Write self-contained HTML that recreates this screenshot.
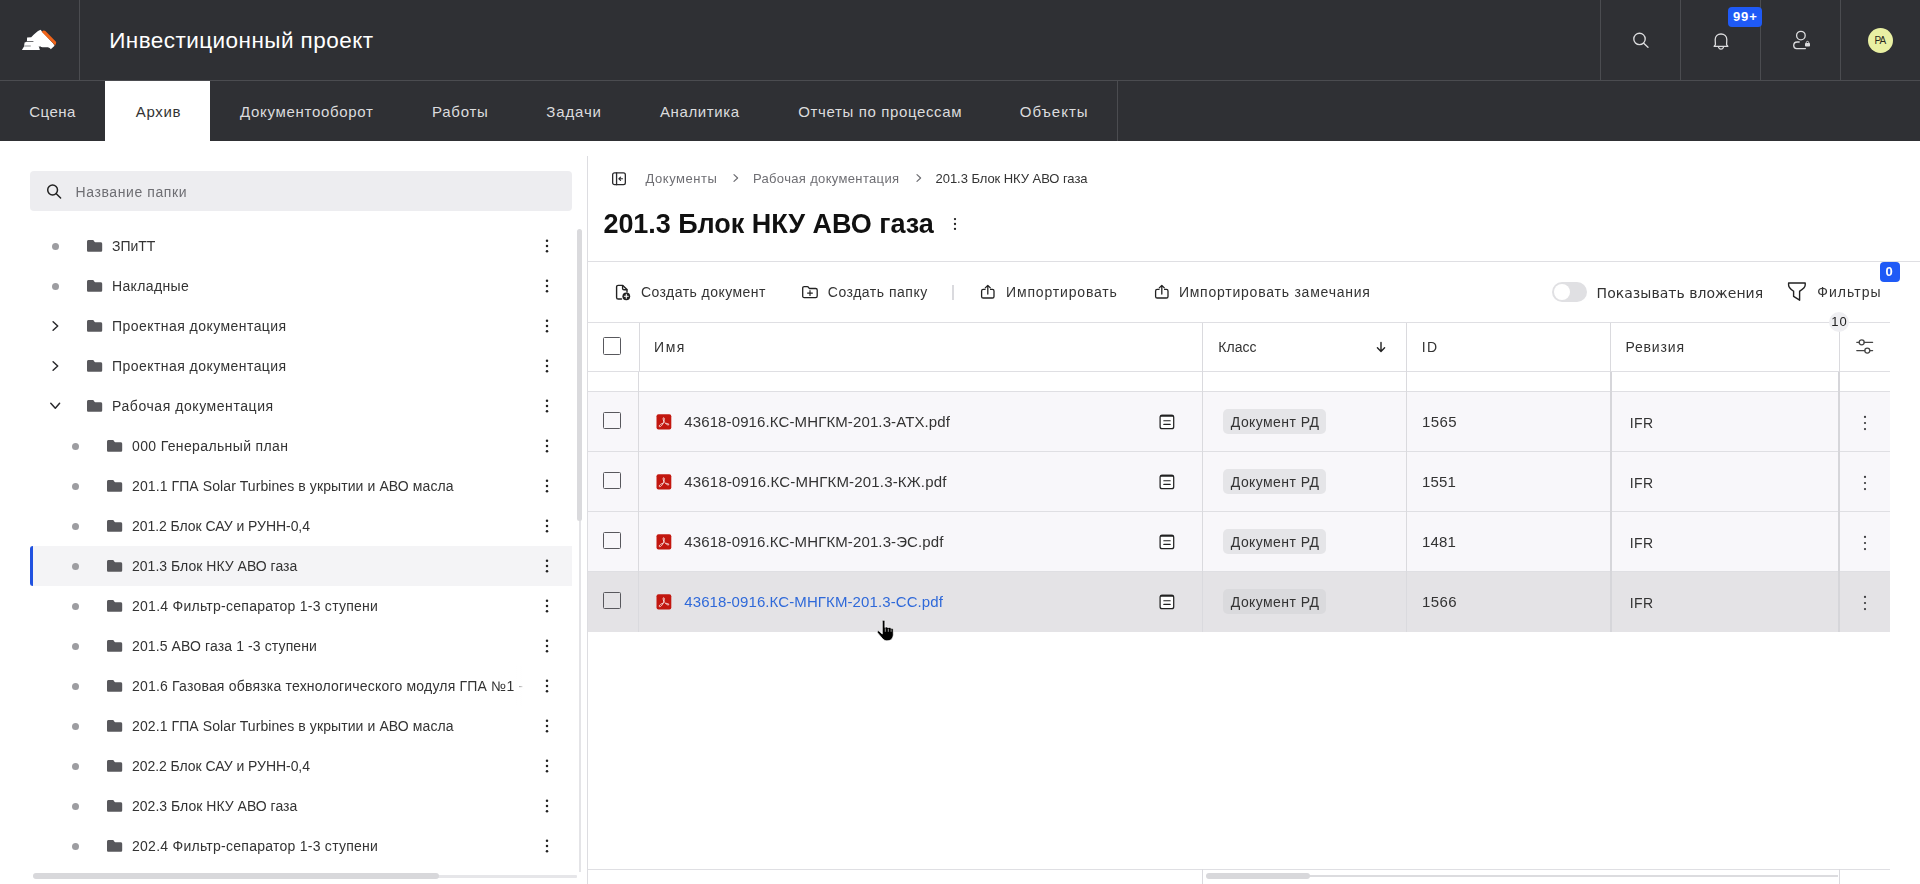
<!DOCTYPE html>
<html lang="ru">
<head>
<meta charset="utf-8">
<title>Инвестиционный проект</title>
<style>
*{box-sizing:border-box;margin:0;padding:0}
html,body{width:1920px;height:884px;overflow:hidden;background:#fff}
body{font-family:"Liberation Sans",sans-serif;font-size:14px;color:#333;position:relative}
div,span,svg{position:absolute}
svg{overflow:visible}
#hdr{left:0;top:0;width:1920px;height:141px;background:#2f3034}
.vl{top:0;width:1px;height:80px;background:#4b4c50}
.hl{left:0;top:80px;width:1920px;height:1px;background:#4b4c50}
#title{top:27px;font-size:22.5px;line-height:28px;color:#fff;white-space:nowrap}
.tab{top:82px;height:60px;line-height:60px;font-size:15px;color:#dcdcde;white-space:nowrap}
.tabbg{left:105px;top:81px;width:105px;height:60px;background:#fff}
.badge{background:#1f5af6;color:#fff;font-weight:bold;border-radius:4px;white-space:nowrap}
#vsep{left:587px;top:156px;width:1px;height:728px;background:#dddde1}
#search{left:30px;top:171px;width:542px;height:40px;background:#ededf0;border-radius:4px}
.ph{top:172px;line-height:40px;font-size:14px;color:#6e6e73;white-space:nowrap}
.sel{left:30px;width:542px;height:40px;background:#f4f4f6}
.selbar{left:30px;width:3px;height:40px;background:#2052e0;border-radius:3px 0 0 3px}
.dot{width:7px;height:7px;border-radius:50%;background:#9d9da1}
.lbl{line-height:40px;font-size:14px;color:#333;white-space:nowrap}
.crumb{top:170px;line-height:18px;font-size:13px;color:#6e6e73;white-space:nowrap}
#h1{top:206px;font-size:27px;line-height:36px;font-weight:bold;color:#111;white-space:nowrap}
.hline{height:1px;background:#dfdfe3}
.vline{width:1px;background:#dadade}
.tb{top:282px;line-height:20px;font-size:14px;color:#333;white-space:nowrap}
.th{top:337px;line-height:20px;font-size:14px;color:#333;white-space:nowrap}
.trow{left:588px;width:1302px;height:59px;background:#f8f7fa}
.cb{width:18px;height:18px;border:1.5px solid #58585d;border-radius:1.5px;background:#fff}
.fname{line-height:20px;font-size:15px;color:#333;white-space:nowrap}
.chip{left:1223px;width:103px;height:25px;background:#e5e5e8;border-radius:5px}
.chipt{line-height:20px;font-size:14px;color:#333;white-space:nowrap}
.cell{line-height:20px;font-size:15px;color:#333;white-space:nowrap}
.cell14{line-height:20px;font-size:14px;color:#333;white-space:nowrap}
</style>
</head>
<body>
<div id="hdr"></div>
<div class="vl" style="left:79px"></div>
<div class="vl" style="left:1600px"></div>
<div class="vl" style="left:1680px"></div>
<div class="vl" style="left:1760px"></div>
<div class="vl" style="left:1840px"></div>
<div class="hl"></div>
<div class="tabbg"></div>
<div class="vl" style="left:1117px;top:81px;height:60px"></div>
<div id="title" style="left:109.19px;letter-spacing:0.446px;">Инвестиционный проект</div>
<div class="tab" style="left:29.25px;letter-spacing:0.45px;">Сцена</div>
<div class="tab" style="left:135.7px;letter-spacing:0.716px;color:#333">Архив</div>
<div class="tab" style="left:239.94px;letter-spacing:0.697px;">Документооборот</div>
<div class="tab" style="left:432.11px;letter-spacing:0.705px;">Работы</div>
<div class="tab" style="left:546.26px;letter-spacing:0.872px;">Задачи</div>
<div class="tab" style="left:660.0px;letter-spacing:0.594px;">Аналитика</div>
<div class="tab" style="left:798.31px;letter-spacing:0.628px;">Отчеты по процессам</div>
<div class="tab" style="left:1019.81px;letter-spacing:0.979px;">Объекты</div>
<svg style="left:20px;top:28px" width="40" height="24" viewBox="20 28 40 24">
<path d="M21.9 49.9 L24 46.4 L24.6 42.4 L26.9 41.8 L27.1 37.6 L31.2 37.3 C34 34 37 31.2 40.6 29.7 L42 31.5 L53.2 43.6 L54.6 45.8 L50.8 49.2 C49.8 47.8 48.6 47.2 46.5 47.2 L42.5 47.2 C40.8 47.2 39.6 46.8 38.7 46 L39.9 49.9 Z" fill="#fff"/>
<path d="M41.5 31.7 L42.8 30.9 C43.8 30.2 44.6 30.3 45.4 31.1 L55.7 41.6 C56.3 42.2 56.3 43 55.9 43.8 L54.9 45.8 C54.7 44.8 54.2 44.2 53.4 43.4 L42.4 32.6 Z" fill="#f0641a"/>
<path d="M27 41 L33.4 41 L33.4 41.7 L27 41.7 Z" fill="#2f3034"/>
<path d="M24.2 45.6 L30.8 45.6 L30.8 46.5 L24 46.5 Z" fill="#8e8f92"/>
</svg>
<svg style="left:1630px;top:30px" width="20" height="20" viewBox="0 0 20 20" fill="none" stroke="#dcdcde" stroke-width="1.35" stroke-linecap="round"><circle cx="9.5" cy="8.9" r="5.7"/><path d="M13.7 13.2 L18 17.3"/></svg>
<svg style="left:1710px;top:30px" width="22" height="22" viewBox="1710 30 22 22" fill="none" stroke="#dcdcde" stroke-width="1.3" stroke-linecap="round" stroke-linejoin="round"><path d="M1715.4 44.4 C1715.4 42.6 1715.2 41 1715.2 39.6 C1715.2 36.2 1717.8 34 1721 34 C1724.2 34 1726.8 36.2 1726.8 39.6 C1726.8 41 1726.6 42.6 1726.6 44.4 C1726.6 45.2 1727.8 45.6 1727.8 46.4 L1714.2 46.4 C1714.2 45.6 1715.4 45.2 1715.4 44.4 Z"/><path d="M1718.6 47.4 C1719 48.6 1719.9 49.2 1721 49.2 C1722.1 49.2 1723 48.6 1723.4 47.4"/></svg>
<svg style="left:1790px;top:29px" width="22" height="22" viewBox="1790 29 22 22" fill="none" stroke="#dcdcde" stroke-width="1.3" stroke-linecap="round" stroke-linejoin="round"><circle cx="1800.9" cy="35.6" r="4.3"/><path d="M1799.2 42 L1797.2 42 C1794.8 42 1793.7 43.6 1793.7 45.6 C1793.7 47.6 1794.8 48.6 1796.6 48.6 L1805.4 48.6"/><rect x="1805" y="43" width="5" height="3.6" rx=".8" fill="#dcdcde" stroke="none"/><path d="M1806.3 43.2 L1806.3 42.4 C1806.3 41 1808.7 41 1808.7 42.4 L1808.7 43.2" stroke-width="1"/></svg>
<div style="left:1868px;top:28px;width:25px;height:25px;border-radius:50%;background:#e9f0a3"></div>
<div class="" style="left:1874.39px;letter-spacing:-0.812px;top:34px;line-height:14px;font-size:10px;color:#2a2a20;white-space:nowrap">PA</div>
<div class="badge" style="left:1728px;top:7px;width:34px;height:20px"></div>
<div class="badge" style="left:1733.06px;letter-spacing:0.837px;top:8px;line-height:18px;font-size:13px;background:none">99+</div>
<div id="content" style="left:0;top:0;width:1920px;height:884px;will-change:transform">
<div id="vsep"></div>
<div id="search"></div>
<svg style="left:46px;top:183px" width="17" height="17" viewBox="0 0 17 17" fill="none" stroke="#222" stroke-width="1.5" stroke-linecap="round"><circle cx="6.6" cy="7" r="4.9"/><path d="M10.3 10.8 L14.6 15"/></svg>
<div class="ph" style="left:75.58px;letter-spacing:0.581px;">Название папки</div>
<div class="dot" style="left:51.5px;top:242.5px"></div>
<svg style="left:86.7px;top:240px" width="15.2" height="11.9" viewBox="0 0 15.4 11.9"><path d="M1.6 0 L5.6 0 C6.4 0 6.7 .4 7.1 1 L7.6 1.7 C7.8 2 8 2.1 8.4 2.1 L13.8 2.1 C14.8 2.1 15.4 2.7 15.4 3.7 L15.4 10.3 C15.4 11.3 14.8 11.9 13.8 11.9 L1.6 11.9 C.6 11.9 0 11.3 0 10.3 L0 1.6 C0 .6 .6 0 1.6 0 Z" fill="#58585c"/></svg>
<div class="lbl" style="left:112px;letter-spacing:-0.056px;top:226px">ЗПиТТ</div>
<svg style="left:543.8px;top:236.8px" width="6" height="18" viewBox="-3 -9 6 18"><circle cx="0" cy="-5.2" r="1.25" fill="#222"/><circle cx="0" cy="0" r="1.25" fill="#222"/><circle cx="0" cy="5.2" r="1.25" fill="#222"/></svg>
<div class="dot" style="left:51.5px;top:282.5px"></div>
<svg style="left:86.7px;top:280px" width="15.2" height="11.9" viewBox="0 0 15.4 11.9"><path d="M1.6 0 L5.6 0 C6.4 0 6.7 .4 7.1 1 L7.6 1.7 C7.8 2 8 2.1 8.4 2.1 L13.8 2.1 C14.8 2.1 15.4 2.7 15.4 3.7 L15.4 10.3 C15.4 11.3 14.8 11.9 13.8 11.9 L1.6 11.9 C.6 11.9 0 11.3 0 10.3 L0 1.6 C0 .6 .6 0 1.6 0 Z" fill="#58585c"/></svg>
<div class="lbl" style="left:112px;letter-spacing:0.361px;top:266px">Накладные</div>
<svg style="left:543.8px;top:276.8px" width="6" height="18" viewBox="-3 -9 6 18"><circle cx="0" cy="-5.2" r="1.25" fill="#222"/><circle cx="0" cy="0" r="1.25" fill="#222"/><circle cx="0" cy="5.2" r="1.25" fill="#222"/></svg>
<svg style="left:50px;top:319px" width="12" height="14" viewBox="0 0 12 14" fill="none" stroke="#2a2a2d" stroke-width="1.5" stroke-linecap="round" stroke-linejoin="round"><path d="M3.1 2.7 L7.7 7 L3.1 11.3"/></svg>
<svg style="left:86.7px;top:320px" width="15.2" height="11.9" viewBox="0 0 15.4 11.9"><path d="M1.6 0 L5.6 0 C6.4 0 6.7 .4 7.1 1 L7.6 1.7 C7.8 2 8 2.1 8.4 2.1 L13.8 2.1 C14.8 2.1 15.4 2.7 15.4 3.7 L15.4 10.3 C15.4 11.3 14.8 11.9 13.8 11.9 L1.6 11.9 C.6 11.9 0 11.3 0 10.3 L0 1.6 C0 .6 .6 0 1.6 0 Z" fill="#58585c"/></svg>
<div class="lbl" style="left:112px;letter-spacing:0.447px;top:306px">Проектная документация</div>
<svg style="left:543.8px;top:316.8px" width="6" height="18" viewBox="-3 -9 6 18"><circle cx="0" cy="-5.2" r="1.25" fill="#222"/><circle cx="0" cy="0" r="1.25" fill="#222"/><circle cx="0" cy="5.2" r="1.25" fill="#222"/></svg>
<svg style="left:50px;top:359px" width="12" height="14" viewBox="0 0 12 14" fill="none" stroke="#2a2a2d" stroke-width="1.5" stroke-linecap="round" stroke-linejoin="round"><path d="M3.1 2.7 L7.7 7 L3.1 11.3"/></svg>
<svg style="left:86.7px;top:360px" width="15.2" height="11.9" viewBox="0 0 15.4 11.9"><path d="M1.6 0 L5.6 0 C6.4 0 6.7 .4 7.1 1 L7.6 1.7 C7.8 2 8 2.1 8.4 2.1 L13.8 2.1 C14.8 2.1 15.4 2.7 15.4 3.7 L15.4 10.3 C15.4 11.3 14.8 11.9 13.8 11.9 L1.6 11.9 C.6 11.9 0 11.3 0 10.3 L0 1.6 C0 .6 .6 0 1.6 0 Z" fill="#58585c"/></svg>
<div class="lbl" style="left:112px;letter-spacing:0.447px;top:346px">Проектная документация</div>
<svg style="left:543.8px;top:356.8px" width="6" height="18" viewBox="-3 -9 6 18"><circle cx="0" cy="-5.2" r="1.25" fill="#222"/><circle cx="0" cy="0" r="1.25" fill="#222"/><circle cx="0" cy="5.2" r="1.25" fill="#222"/></svg>
<svg style="left:49px;top:400px" width="14" height="12" viewBox="0 0 14 12" fill="none" stroke="#2a2a2d" stroke-width="1.5" stroke-linecap="round" stroke-linejoin="round"><path d="M1.8 3.3 L6.3 8.2 L10.6 3.3"/></svg>
<svg style="left:86.7px;top:400px" width="15.2" height="11.9" viewBox="0 0 15.4 11.9"><path d="M1.6 0 L5.6 0 C6.4 0 6.7 .4 7.1 1 L7.6 1.7 C7.8 2 8 2.1 8.4 2.1 L13.8 2.1 C14.8 2.1 15.4 2.7 15.4 3.7 L15.4 10.3 C15.4 11.3 14.8 11.9 13.8 11.9 L1.6 11.9 C.6 11.9 0 11.3 0 10.3 L0 1.6 C0 .6 .6 0 1.6 0 Z" fill="#58585c"/></svg>
<div class="lbl" style="left:112px;letter-spacing:0.566px;top:386px">Рабочая документация</div>
<svg style="left:543.8px;top:396.8px" width="6" height="18" viewBox="-3 -9 6 18"><circle cx="0" cy="-5.2" r="1.25" fill="#222"/><circle cx="0" cy="0" r="1.25" fill="#222"/><circle cx="0" cy="5.2" r="1.25" fill="#222"/></svg>
<div class="dot" style="left:71.5px;top:442.5px"></div>
<svg style="left:106.7px;top:440px" width="15.2" height="11.9" viewBox="0 0 15.4 11.9"><path d="M1.6 0 L5.6 0 C6.4 0 6.7 .4 7.1 1 L7.6 1.7 C7.8 2 8 2.1 8.4 2.1 L13.8 2.1 C14.8 2.1 15.4 2.7 15.4 3.7 L15.4 10.3 C15.4 11.3 14.8 11.9 13.8 11.9 L1.6 11.9 C.6 11.9 0 11.3 0 10.3 L0 1.6 C0 .6 .6 0 1.6 0 Z" fill="#58585c"/></svg>
<div class="lbl" style="left:132px;letter-spacing:0.365px;top:426px">000 Генеральный план</div>
<svg style="left:543.8px;top:436.8px" width="6" height="18" viewBox="-3 -9 6 18"><circle cx="0" cy="-5.2" r="1.25" fill="#222"/><circle cx="0" cy="0" r="1.25" fill="#222"/><circle cx="0" cy="5.2" r="1.25" fill="#222"/></svg>
<div class="dot" style="left:71.5px;top:482.5px"></div>
<svg style="left:106.7px;top:480px" width="15.2" height="11.9" viewBox="0 0 15.4 11.9"><path d="M1.6 0 L5.6 0 C6.4 0 6.7 .4 7.1 1 L7.6 1.7 C7.8 2 8 2.1 8.4 2.1 L13.8 2.1 C14.8 2.1 15.4 2.7 15.4 3.7 L15.4 10.3 C15.4 11.3 14.8 11.9 13.8 11.9 L1.6 11.9 C.6 11.9 0 11.3 0 10.3 L0 1.6 C0 .6 .6 0 1.6 0 Z" fill="#58585c"/></svg>
<div class="lbl" style="left:132px;letter-spacing:0.095px;top:466px">201.1 ГПА Solar Turbines в укрытии и АВО масла</div>
<svg style="left:543.8px;top:476.8px" width="6" height="18" viewBox="-3 -9 6 18"><circle cx="0" cy="-5.2" r="1.25" fill="#222"/><circle cx="0" cy="0" r="1.25" fill="#222"/><circle cx="0" cy="5.2" r="1.25" fill="#222"/></svg>
<div class="dot" style="left:71.5px;top:522.5px"></div>
<svg style="left:106.7px;top:520px" width="15.2" height="11.9" viewBox="0 0 15.4 11.9"><path d="M1.6 0 L5.6 0 C6.4 0 6.7 .4 7.1 1 L7.6 1.7 C7.8 2 8 2.1 8.4 2.1 L13.8 2.1 C14.8 2.1 15.4 2.7 15.4 3.7 L15.4 10.3 C15.4 11.3 14.8 11.9 13.8 11.9 L1.6 11.9 C.6 11.9 0 11.3 0 10.3 L0 1.6 C0 .6 .6 0 1.6 0 Z" fill="#58585c"/></svg>
<div class="lbl" style="left:132px;letter-spacing:-0.058px;top:506px">201.2 Блок САУ и РУНН-0,4</div>
<svg style="left:543.8px;top:516.8px" width="6" height="18" viewBox="-3 -9 6 18"><circle cx="0" cy="-5.2" r="1.25" fill="#222"/><circle cx="0" cy="0" r="1.25" fill="#222"/><circle cx="0" cy="5.2" r="1.25" fill="#222"/></svg>
<div class="sel" style="top:546px"></div><div class="selbar" style="top:546px"></div>
<div class="dot" style="left:71.5px;top:562.5px"></div>
<svg style="left:106.7px;top:560px" width="15.2" height="11.9" viewBox="0 0 15.4 11.9"><path d="M1.6 0 L5.6 0 C6.4 0 6.7 .4 7.1 1 L7.6 1.7 C7.8 2 8 2.1 8.4 2.1 L13.8 2.1 C14.8 2.1 15.4 2.7 15.4 3.7 L15.4 10.3 C15.4 11.3 14.8 11.9 13.8 11.9 L1.6 11.9 C.6 11.9 0 11.3 0 10.3 L0 1.6 C0 .6 .6 0 1.6 0 Z" fill="#58585c"/></svg>
<div class="lbl" style="left:132px;letter-spacing:0.016px;top:546px">201.3 Блок НКУ АВО газа</div>
<svg style="left:543.8px;top:556.8px" width="6" height="18" viewBox="-3 -9 6 18"><circle cx="0" cy="-5.2" r="1.25" fill="#222"/><circle cx="0" cy="0" r="1.25" fill="#222"/><circle cx="0" cy="5.2" r="1.25" fill="#222"/></svg>
<div class="dot" style="left:71.5px;top:602.5px"></div>
<svg style="left:106.7px;top:600px" width="15.2" height="11.9" viewBox="0 0 15.4 11.9"><path d="M1.6 0 L5.6 0 C6.4 0 6.7 .4 7.1 1 L7.6 1.7 C7.8 2 8 2.1 8.4 2.1 L13.8 2.1 C14.8 2.1 15.4 2.7 15.4 3.7 L15.4 10.3 C15.4 11.3 14.8 11.9 13.8 11.9 L1.6 11.9 C.6 11.9 0 11.3 0 10.3 L0 1.6 C0 .6 .6 0 1.6 0 Z" fill="#58585c"/></svg>
<div class="lbl" style="left:132px;letter-spacing:0.259px;top:586px">201.4 Фильтр-сепаратор 1-3 ступени</div>
<svg style="left:543.8px;top:596.8px" width="6" height="18" viewBox="-3 -9 6 18"><circle cx="0" cy="-5.2" r="1.25" fill="#222"/><circle cx="0" cy="0" r="1.25" fill="#222"/><circle cx="0" cy="5.2" r="1.25" fill="#222"/></svg>
<div class="dot" style="left:71.5px;top:642.5px"></div>
<svg style="left:106.7px;top:640px" width="15.2" height="11.9" viewBox="0 0 15.4 11.9"><path d="M1.6 0 L5.6 0 C6.4 0 6.7 .4 7.1 1 L7.6 1.7 C7.8 2 8 2.1 8.4 2.1 L13.8 2.1 C14.8 2.1 15.4 2.7 15.4 3.7 L15.4 10.3 C15.4 11.3 14.8 11.9 13.8 11.9 L1.6 11.9 C.6 11.9 0 11.3 0 10.3 L0 1.6 C0 .6 .6 0 1.6 0 Z" fill="#58585c"/></svg>
<div class="lbl" style="left:132px;letter-spacing:0.115px;top:626px">201.5 АВО газа 1 -3 ступени</div>
<svg style="left:543.8px;top:636.8px" width="6" height="18" viewBox="-3 -9 6 18"><circle cx="0" cy="-5.2" r="1.25" fill="#222"/><circle cx="0" cy="0" r="1.25" fill="#222"/><circle cx="0" cy="5.2" r="1.25" fill="#222"/></svg>
<div class="dot" style="left:71.5px;top:682.5px"></div>
<svg style="left:106.7px;top:680px" width="15.2" height="11.9" viewBox="0 0 15.4 11.9"><path d="M1.6 0 L5.6 0 C6.4 0 6.7 .4 7.1 1 L7.6 1.7 C7.8 2 8 2.1 8.4 2.1 L13.8 2.1 C14.8 2.1 15.4 2.7 15.4 3.7 L15.4 10.3 C15.4 11.3 14.8 11.9 13.8 11.9 L1.6 11.9 C.6 11.9 0 11.3 0 10.3 L0 1.6 C0 .6 .6 0 1.6 0 Z" fill="#58585c"/></svg>
<div class="lbl" style="left:132px;top:666px;letter-spacing:0.2px;width:395px;overflow:hidden">201.6 Газовая обвязка технологического модуля ГПА №1 -3<span style="right:0;top:0;width:14px;height:40px;background:linear-gradient(90deg,rgba(255,255,255,0),#fff 80%)"></span></div>
<svg style="left:543.8px;top:676.8px" width="6" height="18" viewBox="-3 -9 6 18"><circle cx="0" cy="-5.2" r="1.25" fill="#222"/><circle cx="0" cy="0" r="1.25" fill="#222"/><circle cx="0" cy="5.2" r="1.25" fill="#222"/></svg>
<div class="dot" style="left:71.5px;top:722.5px"></div>
<svg style="left:106.7px;top:720px" width="15.2" height="11.9" viewBox="0 0 15.4 11.9"><path d="M1.6 0 L5.6 0 C6.4 0 6.7 .4 7.1 1 L7.6 1.7 C7.8 2 8 2.1 8.4 2.1 L13.8 2.1 C14.8 2.1 15.4 2.7 15.4 3.7 L15.4 10.3 C15.4 11.3 14.8 11.9 13.8 11.9 L1.6 11.9 C.6 11.9 0 11.3 0 10.3 L0 1.6 C0 .6 .6 0 1.6 0 Z" fill="#58585c"/></svg>
<div class="lbl" style="left:132px;letter-spacing:0.095px;top:706px">202.1 ГПА Solar Turbines в укрытии и АВО масла</div>
<svg style="left:543.8px;top:716.8px" width="6" height="18" viewBox="-3 -9 6 18"><circle cx="0" cy="-5.2" r="1.25" fill="#222"/><circle cx="0" cy="0" r="1.25" fill="#222"/><circle cx="0" cy="5.2" r="1.25" fill="#222"/></svg>
<div class="dot" style="left:71.5px;top:762.5px"></div>
<svg style="left:106.7px;top:760px" width="15.2" height="11.9" viewBox="0 0 15.4 11.9"><path d="M1.6 0 L5.6 0 C6.4 0 6.7 .4 7.1 1 L7.6 1.7 C7.8 2 8 2.1 8.4 2.1 L13.8 2.1 C14.8 2.1 15.4 2.7 15.4 3.7 L15.4 10.3 C15.4 11.3 14.8 11.9 13.8 11.9 L1.6 11.9 C.6 11.9 0 11.3 0 10.3 L0 1.6 C0 .6 .6 0 1.6 0 Z" fill="#58585c"/></svg>
<div class="lbl" style="left:132px;letter-spacing:-0.058px;top:746px">202.2 Блок САУ и РУНН-0,4</div>
<svg style="left:543.8px;top:756.8px" width="6" height="18" viewBox="-3 -9 6 18"><circle cx="0" cy="-5.2" r="1.25" fill="#222"/><circle cx="0" cy="0" r="1.25" fill="#222"/><circle cx="0" cy="5.2" r="1.25" fill="#222"/></svg>
<div class="dot" style="left:71.5px;top:802.5px"></div>
<svg style="left:106.7px;top:800px" width="15.2" height="11.9" viewBox="0 0 15.4 11.9"><path d="M1.6 0 L5.6 0 C6.4 0 6.7 .4 7.1 1 L7.6 1.7 C7.8 2 8 2.1 8.4 2.1 L13.8 2.1 C14.8 2.1 15.4 2.7 15.4 3.7 L15.4 10.3 C15.4 11.3 14.8 11.9 13.8 11.9 L1.6 11.9 C.6 11.9 0 11.3 0 10.3 L0 1.6 C0 .6 .6 0 1.6 0 Z" fill="#58585c"/></svg>
<div class="lbl" style="left:132px;letter-spacing:0.016px;top:786px">202.3 Блок НКУ АВО газа</div>
<svg style="left:543.8px;top:796.8px" width="6" height="18" viewBox="-3 -9 6 18"><circle cx="0" cy="-5.2" r="1.25" fill="#222"/><circle cx="0" cy="0" r="1.25" fill="#222"/><circle cx="0" cy="5.2" r="1.25" fill="#222"/></svg>
<div class="dot" style="left:71.5px;top:842.5px"></div>
<svg style="left:106.7px;top:840px" width="15.2" height="11.9" viewBox="0 0 15.4 11.9"><path d="M1.6 0 L5.6 0 C6.4 0 6.7 .4 7.1 1 L7.6 1.7 C7.8 2 8 2.1 8.4 2.1 L13.8 2.1 C14.8 2.1 15.4 2.7 15.4 3.7 L15.4 10.3 C15.4 11.3 14.8 11.9 13.8 11.9 L1.6 11.9 C.6 11.9 0 11.3 0 10.3 L0 1.6 C0 .6 .6 0 1.6 0 Z" fill="#58585c"/></svg>
<div class="lbl" style="left:132px;letter-spacing:0.259px;top:826px">202.4 Фильтр-сепаратор 1-3 ступени</div>
<svg style="left:543.8px;top:836.8px" width="6" height="18" viewBox="-3 -9 6 18"><circle cx="0" cy="-5.2" r="1.25" fill="#222"/><circle cx="0" cy="0" r="1.25" fill="#222"/><circle cx="0" cy="5.2" r="1.25" fill="#222"/></svg>
<div style="left:579px;top:232px;width:1.5px;height:640px;background:#e4e4e7"></div>
<div style="left:577px;top:229px;width:5px;height:292px;border-radius:2.5px;background:#dadadd"></div>
<div style="left:36px;top:875px;width:541px;height:2.5px;background:#e6e6e9;border-radius:1px"></div>
<div style="left:33px;top:873px;width:406px;height:6px;border-radius:3px;background:#d8d8db"></div>
<svg style="left:612px;top:172px" width="14" height="13.5" viewBox="0 0 15 14" fill="none" stroke="#2a2a2d" stroke-width="1.4" stroke-linejoin="round" stroke-linecap="round"><rect x=".7" y=".7" width="13.6" height="12.6" rx="2"/><path d="M4.9 .7 L4.9 13.3"/><path d="M11.3 7 L7.6 7 M9.2 5.2 L7.4 7 L9.2 8.8" stroke-width="1.2"/></svg>
<div class="crumb" style="left:645.54px;letter-spacing:0.534px;">Документы</div>
<div class="crumb" style="left:752.94px;letter-spacing:0.339px;">Рабочая документация</div>
<div class="crumb" style="left:935.58px;letter-spacing:-0.053px;color:#333">201.3 Блок НКУ АВО газа</div>
<svg style="left:733.3px;top:173px" width="6" height="10" viewBox="0 0 6 10" fill="none" stroke="#6e6e73" stroke-width="1.2" stroke-linecap="round" stroke-linejoin="round"><path d="M1 1.6 L4.6 5 L1 8.4"/></svg>
<svg style="left:916.2px;top:173px" width="6" height="10" viewBox="0 0 6 10" fill="none" stroke="#6e6e73" stroke-width="1.2" stroke-linecap="round" stroke-linejoin="round"><path d="M1 1.6 L4.6 5 L1 8.4"/></svg>
<div id="h1" style="left:603.42px;letter-spacing:-0.039px;">201.3 Блок НКУ АВО газа</div>
<svg style="left:952px;top:215.2px" width="6" height="18" viewBox="-3 -9 6 18"><circle cx="0" cy="-4.9" r="1.15" fill="#222"/><circle cx="0" cy="0" r="1.15" fill="#222"/><circle cx="0" cy="4.9" r="1.15" fill="#222"/></svg>
<div class="hline" style="left:588px;top:261px;width:1332px"></div>
<svg style="left:615px;top:284px" width="17" height="17" viewBox="0 0 17 17" fill="none" stroke="#222" stroke-width="1.4" stroke-linejoin="round" stroke-linecap="round"><path d="M6.5 15 L3.2 15 C2.2 15 1.6 14.4 1.6 13.4 L1.6 3 C1.6 2 2.2 1.4 3.2 1.4 L7.8 1.4 L12 5.6 L12 8"/><path d="M7.6 1.6 L7.6 4.4 C7.6 5.3 8.1 5.8 9 5.8 L11.8 5.8"/><circle cx="11.3" cy="12.3" r="3.9" fill="#222" stroke="none"/><path d="M11.3 10.4 L11.3 14.2 M9.4 12.3 L13.2 12.3" stroke="#fff" stroke-width="1.1"/></svg>
<div class="tb" style="left:640.91px;letter-spacing:0.453px;">Создать документ</div>
<svg style="left:802px;top:286px" width="16" height="13" viewBox="0 0 16 13" fill="none" stroke="#222" stroke-width="1.3" stroke-linejoin="round" stroke-linecap="round"><path d="M.7 2.2 C.7 1.2 1.2 .7 2.2 .7 L5.2 .7 C6 .7 6.3 1 6.7 1.6 L7.3 2.5 L13.6 2.5 C14.6 2.5 15.2 3.1 15.2 4.1 L15.2 10 C15.2 11 14.6 11.6 13.6 11.6 L2.2 11.6 C1.2 11.6 .7 11 .7 10 Z"/><path d="M8 4.7 L8 9.5 M5.6 7.1 L10.4 7.1" stroke-width="1.2"/></svg>
<div class="tb" style="left:827.81px;letter-spacing:0.506px;">Создать папку</div>
<div style="left:952px;top:285px;width:1.5px;height:15px;background:#dadade"></div>
<svg style="left:980.2px;top:284px" width="16" height="16" viewBox="0 0 16 16" fill="none" stroke="#222" stroke-width="1.3" stroke-linejoin="round" stroke-linecap="round"><path d="M5 5.4 L3.2 5.4 C2.2 5.4 1.6 6 1.6 7 L1.6 12.4 C1.6 13.4 2.2 14 3.2 14 L12.4 14 C13.4 14 14 13.4 14 12.4 L14 7 C14 6 13.4 5.4 12.4 5.4 L10.6 5.4"/><path d="M7.8 10 L7.8 1.6 M5.3 3.9 L7.8 1.4 L10.3 3.9"/></svg>
<div class="tb" style="left:1006.08px;letter-spacing:0.831px;">Импортировать</div>
<svg style="left:1153.6px;top:284px" width="16" height="16" viewBox="0 0 16 16" fill="none" stroke="#222" stroke-width="1.3" stroke-linejoin="round" stroke-linecap="round"><path d="M5 5.4 L3.2 5.4 C2.2 5.4 1.6 6 1.6 7 L1.6 12.4 C1.6 13.4 2.2 14 3.2 14 L12.4 14 C13.4 14 14 13.4 14 12.4 L14 7 C14 6 13.4 5.4 12.4 5.4 L10.6 5.4"/><path d="M7.8 10 L7.8 1.6 M5.3 3.9 L7.8 1.4 L10.3 3.9"/></svg>
<div class="tb" style="left:1178.88px;letter-spacing:0.773px;">Импортировать замечания</div>
<div style="left:1552px;top:282px;width:35px;height:20px;border-radius:10px;background:#e0e0e3"></div><div style="left:1554px;top:284px;width:16px;height:16px;border-radius:50%;background:#fff"></div>
<div class="tb" style="left:1596.59px;letter-spacing:0.033px;top:283px;font-family:'DejaVu Sans',sans-serif">Показывать вложения</div>
<svg style="left:1785px;top:280px" width="24" height="24" viewBox="1785 280 24 24" fill="none" stroke="#222" stroke-width="1.4" stroke-linejoin="round"><path d="M1788.6 283 L1805.2 283 L1805.2 285 C1805.2 288 1802.2 289.6 1799.6 291.2 L1799.6 300.2 L1793.6 296.4 L1793.6 291.2 C1791.2 289.6 1788.6 288 1788.6 285 Z"/></svg>
<div class="tb" style="left:1817.25px;letter-spacing:1.027px;">Фильтры</div>
<div class="badge" style="left:1880px;top:262px;width:20px;height:20px"></div>
<div class="badge" style="left:1885.5px;letter-spacing:0px;top:263px;line-height:18px;font-size:13px;background:none">0</div>
<div class="hline" style="left:588px;top:322px;width:1302px"></div>
<div class="hline" style="left:588px;top:371px;width:1302px"></div>
<div class="hline" style="left:588px;top:391px;width:1302px"></div>
<div class="trow" style="top:392px"></div>
<div class="hline" style="left:588px;top:451px;width:1302px"></div>
<div class="cb" style="left:603px;top:412px;height:17px;background:none"></div>
<svg style="left:656px;top:414px" width="16" height="16" viewBox="0 0 16 16"><rect x=".5" y=".3" width="14.8" height="15.1" rx="2" fill="#c2170f"/><path d="M3.2 11.9 C3.6 10.6 5.6 9.6 7.2 9.2 C8 7.8 8.4 6.3 8.3 4.6 C8.2 3.4 7.2 3.4 7.1 4.5 C7 6.3 8.2 8.3 9.6 9.3 C10.8 9.4 12.4 9.5 12.8 10.2 C13.2 11 12 11.3 11 10.6 C10.4 10.2 9.9 9.7 9.6 9.3 M7.2 9.2 C6.4 10.6 5.4 12 4.4 12.5 C3.6 12.9 3 12.6 3.2 11.9" fill="none" stroke="#fff" stroke-width=".75" stroke-linejoin="round"/></svg>
<div class="fname" style="left:684.29px;letter-spacing:0.118px;top:412px">43618-0916.КС-МНГКМ-201.3-АТХ.pdf</div>
<svg style="left:1159px;top:414px" width="16" height="16" viewBox="0 0 16 16" fill="none" stroke="#222" stroke-linecap="round"><rect x="1.1" y="1.3" width="13.6" height="13.4" rx="2" stroke-width="1.25" fill="#fff"/><path d="M2.2 1.7 L13.6 1.7" stroke-width="2"/><path d="M4.8 6.7 L11.2 6.7 M4.8 10.4 L11.2 10.4" stroke-width="1.15"/></svg>
<div class="chip" style="top:409px"></div>
<div class="chipt" style="left:1230.84px;letter-spacing:0.424px;top:412px">Документ РД</div>
<div class="cell" style="left:1422.08px;letter-spacing:0.392px;top:412px">1565</div>
<div class="cell14" style="left:1629.75px;letter-spacing:0.356px;top:413px">IFR</div>
<svg style="left:1861.8px;top:414.1px" width="6" height="18" viewBox="-3 -9 6 18"><circle cx="0" cy="-6.1" r="1.1" fill="#38383b"/><circle cx="0" cy="0" r="1.1" fill="#38383b"/><circle cx="0" cy="6.1" r="1.1" fill="#38383b"/></svg>
<div class="trow" style="top:452px"></div>
<div class="hline" style="left:588px;top:511px;width:1302px"></div>
<div class="cb" style="left:603px;top:472px;height:17px;background:none"></div>
<svg style="left:656px;top:474px" width="16" height="16" viewBox="0 0 16 16"><rect x=".5" y=".3" width="14.8" height="15.1" rx="2" fill="#c2170f"/><path d="M3.2 11.9 C3.6 10.6 5.6 9.6 7.2 9.2 C8 7.8 8.4 6.3 8.3 4.6 C8.2 3.4 7.2 3.4 7.1 4.5 C7 6.3 8.2 8.3 9.6 9.3 C10.8 9.4 12.4 9.5 12.8 10.2 C13.2 11 12 11.3 11 10.6 C10.4 10.2 9.9 9.7 9.6 9.3 M7.2 9.2 C6.4 10.6 5.4 12 4.4 12.5 C3.6 12.9 3 12.6 3.2 11.9" fill="none" stroke="#fff" stroke-width=".75" stroke-linejoin="round"/></svg>
<div class="fname" style="left:684.29px;letter-spacing:0.182px;top:472px">43618-0916.КС-МНГКМ-201.3-КЖ.pdf</div>
<svg style="left:1159px;top:474px" width="16" height="16" viewBox="0 0 16 16" fill="none" stroke="#222" stroke-linecap="round"><rect x="1.1" y="1.3" width="13.6" height="13.4" rx="2" stroke-width="1.25" fill="#fff"/><path d="M2.2 1.7 L13.6 1.7" stroke-width="2"/><path d="M4.8 6.7 L11.2 6.7 M4.8 10.4 L11.2 10.4" stroke-width="1.15"/></svg>
<div class="chip" style="top:469px"></div>
<div class="chipt" style="left:1230.84px;letter-spacing:0.424px;top:472px">Документ РД</div>
<div class="cell" style="left:1422.08px;letter-spacing:0.1px;top:472px">1551</div>
<div class="cell14" style="left:1629.75px;letter-spacing:0.356px;top:473px">IFR</div>
<svg style="left:1861.8px;top:474.1px" width="6" height="18" viewBox="-3 -9 6 18"><circle cx="0" cy="-6.1" r="1.1" fill="#38383b"/><circle cx="0" cy="0" r="1.1" fill="#38383b"/><circle cx="0" cy="6.1" r="1.1" fill="#38383b"/></svg>
<div class="trow" style="top:512px"></div>
<div class="hline" style="left:588px;top:571px;width:1302px"></div>
<div class="cb" style="left:603px;top:532px;height:17px;background:none"></div>
<svg style="left:656px;top:534px" width="16" height="16" viewBox="0 0 16 16"><rect x=".5" y=".3" width="14.8" height="15.1" rx="2" fill="#c2170f"/><path d="M3.2 11.9 C3.6 10.6 5.6 9.6 7.2 9.2 C8 7.8 8.4 6.3 8.3 4.6 C8.2 3.4 7.2 3.4 7.1 4.5 C7 6.3 8.2 8.3 9.6 9.3 C10.8 9.4 12.4 9.5 12.8 10.2 C13.2 11 12 11.3 11 10.6 C10.4 10.2 9.9 9.7 9.6 9.3 M7.2 9.2 C6.4 10.6 5.4 12 4.4 12.5 C3.6 12.9 3 12.6 3.2 11.9" fill="none" stroke="#fff" stroke-width=".75" stroke-linejoin="round"/></svg>
<div class="fname" style="left:684.29px;letter-spacing:0.118px;top:532px">43618-0916.КС-МНГКМ-201.3-ЭС.pdf</div>
<svg style="left:1159px;top:534px" width="16" height="16" viewBox="0 0 16 16" fill="none" stroke="#222" stroke-linecap="round"><rect x="1.1" y="1.3" width="13.6" height="13.4" rx="2" stroke-width="1.25" fill="#fff"/><path d="M2.2 1.7 L13.6 1.7" stroke-width="2"/><path d="M4.8 6.7 L11.2 6.7 M4.8 10.4 L11.2 10.4" stroke-width="1.15"/></svg>
<div class="chip" style="top:529px"></div>
<div class="chipt" style="left:1230.84px;letter-spacing:0.424px;top:532px">Документ РД</div>
<div class="cell" style="left:1422.08px;letter-spacing:0.1px;top:532px">1481</div>
<div class="cell14" style="left:1629.75px;letter-spacing:0.356px;top:533px">IFR</div>
<svg style="left:1861.8px;top:534.1px" width="6" height="18" viewBox="-3 -9 6 18"><circle cx="0" cy="-6.1" r="1.1" fill="#38383b"/><circle cx="0" cy="0" r="1.1" fill="#38383b"/><circle cx="0" cy="6.1" r="1.1" fill="#38383b"/></svg>
<div class="trow" style="top:572px;background:#e4e3e6"></div>
<div class="hline" style="left:588px;top:631px;width:1302px;background:#e4e3e6"></div>
<div class="cb" style="left:603px;top:592px;height:17px;background:none"></div>
<svg style="left:656px;top:594px" width="16" height="16" viewBox="0 0 16 16"><rect x=".5" y=".3" width="14.8" height="15.1" rx="2" fill="#c2170f"/><path d="M3.2 11.9 C3.6 10.6 5.6 9.6 7.2 9.2 C8 7.8 8.4 6.3 8.3 4.6 C8.2 3.4 7.2 3.4 7.1 4.5 C7 6.3 8.2 8.3 9.6 9.3 C10.8 9.4 12.4 9.5 12.8 10.2 C13.2 11 12 11.3 11 10.6 C10.4 10.2 9.9 9.7 9.6 9.3 M7.2 9.2 C6.4 10.6 5.4 12 4.4 12.5 C3.6 12.9 3 12.6 3.2 11.9" fill="none" stroke="#fff" stroke-width=".75" stroke-linejoin="round"/></svg>
<div class="fname" style="left:684.29px;letter-spacing:0.1px;top:592px;color:#2f69d9">43618-0916.КС-МНГКМ-201.3-СС.pdf</div>
<svg style="left:1159px;top:594px" width="16" height="16" viewBox="0 0 16 16" fill="none" stroke="#222" stroke-linecap="round"><rect x="1.1" y="1.3" width="13.6" height="13.4" rx="2" stroke-width="1.25" fill="#fff"/><path d="M2.2 1.7 L13.6 1.7" stroke-width="2"/><path d="M4.8 6.7 L11.2 6.7 M4.8 10.4 L11.2 10.4" stroke-width="1.15"/></svg>
<div class="chip" style="top:589px;background:#dadadd"></div>
<div class="chipt" style="left:1230.84px;letter-spacing:0.424px;top:592px">Документ РД</div>
<div class="cell" style="left:1422.08px;letter-spacing:0.412px;top:592px">1566</div>
<div class="cell14" style="left:1629.75px;letter-spacing:0.356px;top:593px">IFR</div>
<svg style="left:1861.8px;top:594.1px" width="6" height="18" viewBox="-3 -9 6 18"><circle cx="0" cy="-6.1" r="1.1" fill="#38383b"/><circle cx="0" cy="0" r="1.1" fill="#38383b"/><circle cx="0" cy="6.1" r="1.1" fill="#38383b"/></svg>
<div class="cb" style="left:603px;top:337px"></div>
<div class="th" style="left:654.08px;letter-spacing:1.506px;">Имя</div>
<div class="th" style="left:1218.17px;letter-spacing:0.078px;">Класс</div>
<svg style="left:1375px;top:341px" width="12" height="12" viewBox="0 0 12 12" fill="none" stroke="#222" stroke-width="1.4" stroke-linecap="round" stroke-linejoin="round"><path d="M6 1.4 L6 10.2 M2.4 6.8 L6 10.4 L9.6 6.8"/></svg>
<div class="th" style="left:1421.75px;letter-spacing:1.275px;">ID</div>
<div class="th" style="left:1625.38px;letter-spacing:0.85px;">Ревизия</div>
<svg style="left:1856px;top:338px" width="18" height="18" viewBox="0 0 18 18" fill="none" stroke="#444" stroke-width="1.3" stroke-linecap="round"><path d="M.8 4.3 L3.2 4.3 M8.2 4.3 L16.6 4.3 M.8 12.6 L8.8 12.6 M13.8 12.6 L16.6 12.6"/><circle cx="5.7" cy="4.3" r="2.5"/><circle cx="11.3" cy="12.6" r="2.5"/></svg>
<div class="vline" style="left:639px;top:323px;height:48px"></div>
<div class="vline" style="left:638px;top:372px;height:260px"></div>
<div class="vline" style="left:1202px;top:323px;height:309px"></div>
<div class="vline" style="left:1406px;top:323px;height:309px"></div>
<div class="vline" style="left:1610px;top:323px;height:49px"></div>
<div class="vline" style="left:1839px;top:323px;height:49px"></div>
<div class="vline" style="left:1610px;top:372px;width:2px;height:260px;background:#d6d6da"></div>
<div class="vline" style="left:1838px;top:372px;width:2px;height:260px;background:#d6d6da"></div>
<div style="left:1829px;top:312px;width:20px;height:20px;border-radius:10px;background:#efeff2"></div>
<div class="" style="left:1831.26px;letter-spacing:1.138px;top:313px;line-height:18px;font-size:13px;color:#222;white-space:nowrap">10</div>
<div class="hline" style="left:588px;top:869px;width:1302px"></div>
<div class="vline" style="left:1202px;top:869px;height:15px"></div>
<div class="vline" style="left:1839px;top:869px;height:15px"></div>
<div style="left:1208px;top:875px;width:630px;height:2px;background:#dcdcdf"></div>
<div style="left:1206px;top:873px;width:104px;height:6px;border-radius:3px;background:#d8d8db"></div>
<svg style="left:874px;top:617px" width="24" height="28" viewBox="874 617 24 28"><path d="M882.3 621.3 C882.3 620 884.9 620 884.9 621.3 L884.9 627.6 C885.6 626.7 887.6 626.7 888 627.9 C888.8 627.1 890.6 627.3 891 628.5 C891.8 627.9 893.3 628.5 893.3 629.7 L893.3 634.5 C893.3 638 891 640.7 888 640.7 L886.5 640.7 C884.5 640.7 883.4 639.7 882 638.1 L877.5 632.7 C876.7 631.6 878.2 630.2 879.2 631.2 L882.3 634 Z" fill="#000" stroke="#fff" stroke-width=".7" stroke-linejoin="round"/><path d="M885.3 628.3 L885.3 631.8 M888.3 628.8 L888.3 631.8 M891.1 629.3 L891.1 631.8" stroke="#fff" stroke-width=".6"/></svg>
</div>
</body>
</html>
